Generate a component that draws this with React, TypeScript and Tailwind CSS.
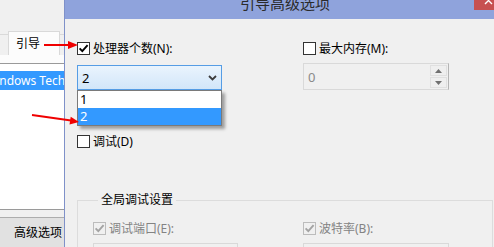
import React from "react";

const F = "font-['Noto_Sans','Noto_Sans_CJK_SC',sans-serif]";

function Box({ checked, disabled }: { checked?: boolean; disabled?: boolean }) {
  return (
    <span
      className={`w-[13px] h-[13px] shrink-0 border flex items-center justify-center ${
        disabled ? "border-[#bcbcbc] bg-[#f0f0f0]" : "border-[#333333] bg-white"
      }`}
    >
      {checked && (
        <svg width="11" height="11" viewBox="0 0 11 11">
          <path
            d="M1.6 5.4 L4.3 8.2 L9.6 2.2"
            fill="none"
            stroke={disabled ? "#a3a3a3" : "#000"}
            strokeWidth="1.9"
          />
        </svg>
      )}
    </span>
  );
}

function Check({ label, checked, disabled }: { label: string; checked?: boolean; disabled?: boolean }) {
  return (
    <div className="h-[13px] flex items-center gap-[3px]">
      <Box checked={checked} disabled={disabled} />
      <span
        className={`text-[12px] leading-[13px] whitespace-nowrap ${disabled ? "text-[#838383]" : "text-black"}`}
      >
        {label}
      </span>
    </div>
  );
}

export default function App() {
  return (
    <div className={`relative w-[494px] h-[247px] overflow-hidden bg-[#f0f0f0] ${F}`}>
      {/* background window */}
      <div className="w-[64px] h-[247px] flex flex-col overflow-hidden bg-[#f0f0f0]">
        <div className="h-[31px] shrink-0" />
        <div className="h-[24px] flex items-end shrink-0">
          <div className="w-[8px] h-[21px] border-t border-[#d9d9d9] bg-[#f0f0f0]" />
          <div className="w-[52px] h-[24px] shrink-0 border-x border-t border-[#d9d9d9] bg-[#fcfcfc] pl-[7px] flex items-center text-[12px] text-black">
            引导
          </div>
          <div className="flex-1 h-[21px] border-t border-[#d9d9d9]" />
        </div>
        <div className="h-[8px] shrink-0 bg-[#fcfcfc]" />
        <div className="h-[147px] shrink-0 border-y border-[#9a9a9a] bg-white pt-[7px]">
          <div className="h-[19px] bg-[#3399ff] text-white text-[12px] leading-[19px] whitespace-nowrap overflow-hidden">
            <span className="ml-[-15px]">Windows Technology</span>
          </div>
        </div>
        <div className="h-[7px] shrink-0" />
        <div className="ml-[-10px] w-[90px] h-[40px] shrink-0 border border-[#adadad] bg-[#e1e1e1] pl-[23px] pt-[8px] text-[12px] leading-[14px] whitespace-nowrap text-black">
          高级选项
        </div>
      </div>

      {/* dialog window */}
      <div className="absolute left-[64px] top-0 w-[430px] h-[247px] border-l border-[#7f91c9] bg-[#f0f0f0] flex flex-col">
        <div className="h-[19px] shrink-0 bg-[#8fa3dc] flex items-start overflow-hidden">
          <span className="pl-[175px] mt-[-4px] text-[15px] leading-[15px] text-[#2b2b2b] whitespace-nowrap">
            引导高级选项
          </span>
          <div className="ml-auto w-[20px] h-[10px] bg-[#c75050] flex justify-end">
            <svg width="12" height="10" viewBox="0 0 12 10">
              <path d="M3 4 L6.5 0.5 L10 4" fill="none" stroke="#fff" strokeWidth="1.4" />
            </svg>
          </div>
        </div>

        <div className="pl-[12px] pt-[23px] flex flex-col">
          <div className="flex">
            <div className="w-[226px] flex flex-col">
              <Check label="处理器个数(N):" checked />
              <div className="relative mt-[10px] w-[145px] h-[25px] border border-[#569de5] bg-gradient-to-b from-[#eaf4fd] to-[#d2e6f9] flex items-center pl-[4px]">
                <span className="text-[13px] leading-[14px] text-black">2</span>
                <svg className="ml-auto mr-[4px]" width="9" height="6" viewBox="0 0 9 6">
                  <path d="M1 1 L4.5 4.5 L8 1" fill="none" stroke="#3c3c3c" strokeWidth="1.8" />
                </svg>
                <div className="absolute left-[-1px] top-[24px] w-[145px] border border-[#7a7a7a] bg-white shadow-[3px_3px_3px_rgba(0,0,0,0.35)] flex flex-col">
                  <div className="h-[17px] pl-[2px] text-[13px] leading-[17px] text-black bg-white">1</div>
                  <div className="h-[17px] pl-[2px] text-[13px] leading-[17px] text-white bg-[#3399ff]">2</div>
                </div>
              </div>
              <div className="mt-[45px]">
                <Check label="调试(D)" />
              </div>
            </div>
            <div className="flex-1 flex flex-col">
              <Check label="最大内存(M):" />
              <div className="mt-[8px] w-[146px] h-[27px] border border-[#d9d9d9] border-r-[#b4b4b4] bg-[#f0f0f0] flex items-center">
                <span className="pl-[4px] text-[13px] leading-[14px] text-[#8a8a8a]">0</span>
                <div className="ml-auto mr-[1px] w-[17px] flex flex-col gap-[1px]">
                  <div className="h-[11px] border border-[#e0e0e0] bg-[#efefef] flex items-center justify-center">
                    <svg width="7" height="4" viewBox="0 0 7 4">
                      <path d="M0 4 L3.5 0 L7 4 Z" fill="#707070" />
                    </svg>
                  </div>
                  <div className="h-[11px] border border-[#e0e0e0] bg-[#efefef] flex items-center justify-center">
                    <svg width="7" height="4" viewBox="0 0 7 4">
                      <path d="M0 0 L3.5 4 L7 0 Z" fill="#707070" />
                    </svg>
                  </div>
                </div>
              </div>
            </div>
          </div>

          <fieldset className="mt-[45px] w-[416px] border border-[#dcdcdc] pl-[15px] pt-[15px] pb-[20px]">
            <legend className="ml-[5px] px-[3px] text-[12px] leading-[14px] text-black">全局调试设置</legend>
            <div className="flex">
              <div className="w-[210px] flex flex-col">
                <Check label="调试端口(E):" checked disabled />
                <div className="mt-[8px] w-[145px] h-[24px] border border-[#d9d9d9] bg-[#f0f0f0]" />
              </div>
              <div className="flex-1 flex flex-col">
                <Check label="波特率(B):" checked disabled />
                <div className="mt-[8px] w-[146px] h-[24px] border border-[#d9d9d9] bg-[#f0f0f0]" />
              </div>
            </div>
          </fieldset>
        </div>
      </div>

      {/* red annotation arrows */}
      <svg className="absolute left-0 top-0 pointer-events-none" width="494" height="247" viewBox="0 0 494 247">
        <line x1="44" y1="45" x2="70" y2="45" stroke="#f00000" strokeWidth="2" />
        <polygon points="68,41 78,45 68,49" fill="#f00000" />
        <line x1="32" y1="115" x2="71" y2="120.6" stroke="#f00000" strokeWidth="2" />
        <polygon points="70.7,116.7 79,122 69.5,124.6" fill="#f00000" />
      </svg>
    </div>
  );
}
